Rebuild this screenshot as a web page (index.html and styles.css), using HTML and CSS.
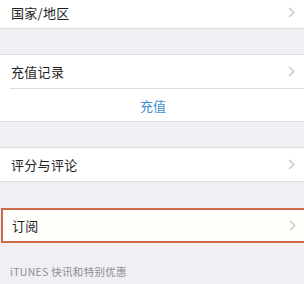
FILE: index.html
```html
<!DOCTYPE html>
<html lang="zh">
<head>
<meta charset="utf-8">
<link rel="stylesheet" href="styles.css">
</head>
<body>
<div class="page">
  <div class="group first">
    <div class="cell top">
      <span class="label">国家/地区</span>
      <svg class="chev" width="7" height="11" viewBox="0 0 7 11"><polyline points="1,1 5.8,5.5 1,10" fill="none" stroke="#c5c5ca" stroke-width="1.3"/></svg>
    </div>
  </div>
  <div class="gap"></div>
  <div class="group">
    <div class="cell tall">
      <span class="label">充值记录</span>
      <svg class="chev" width="7" height="11" viewBox="0 0 7 11"><polyline points="1,1 5.8,5.5 1,10" fill="none" stroke="#c5c5ca" stroke-width="1.3"/></svg>
    </div>
    <div class="inset"></div>
    <div class="cell action"><span class="link">充值</span></div>
  </div>
  <div class="gap"></div>
  <div class="group">
    <div class="cell tall">
      <span class="label">评分与评论</span>
      <svg class="chev" width="7" height="11" viewBox="0 0 7 11"><polyline points="1,1 5.8,5.5 1,10" fill="none" stroke="#c5c5ca" stroke-width="1.3"/></svg>
    </div>
  </div>
  <div class="gap gap-last"></div>
  <div class="group highlight">
    <div class="cell hl-cell">
      <span class="label">订阅</span>
      <svg class="chev" width="7" height="11" viewBox="0 0 7 11"><polyline points="1,1 5.8,5.5 1,10" fill="none" stroke="#c5c5ca" stroke-width="1.3"/></svg>
    </div>
  </div>
  <div class="footer">iTUNES 快讯和特别优惠</div>
</div>
</body>
</html>
```
FILE: styles.css
```css
html, body {
  margin: 0;
  padding: 0;
  background: #efeff4;
}
.page {
  width: 304px;
  height: 284px;
  overflow: hidden;
  font-family: "Noto Sans CJK SC", "Noto Sans", sans-serif;
  background: #efeff4;
}
.group {
  background: #ffffff;
  border-top: 1px solid #dcdce0;
  border-bottom: 1px solid #dcdce0;
}
.group.first {
  border-top: none;
}
.gap {
  height: 25px;
}
.gap-last {
  height: 26px;
}
.cell {
  display: flex;
  align-items: center;
  justify-content: space-between;
  padding: 0 9px 0 11px;
  box-sizing: border-box;
}
.cell.top {
  height: 28px;
  padding-bottom: 4px;
}
.cell.tall {
  height: 33px;
}
.cell.action {
  height: 32px;
  justify-content: center;
  padding-top: 1px;
}
.inset {
  height: 1px;
  margin-left: 10px;
  background: #dcdce0;
}
.label {
  font-size: 13px;
  color: #1e1e1e;
  letter-spacing: 0.3px;
}
.link {
  font-size: 13px;
  color: #3b8fd1;
}
.chev {
  display: block;
}
.highlight {
  border-top: 2px solid #cc6a4b;
  border-bottom: 2px solid #cc6a4b;
  border-left: 2px solid #cc6a4b;
  margin-left: 1px;
  background: #fffefb;
}
.cell.hl-cell {
  height: 31px;
  padding-left: 9px;
  padding-right: 8px;
}
.footer {
  padding: 22px 0 0 10px;
  font-size: 10.5px;
  line-height: 14px;
  color: #8e8e93;
  letter-spacing: 0.3px;
}
```
